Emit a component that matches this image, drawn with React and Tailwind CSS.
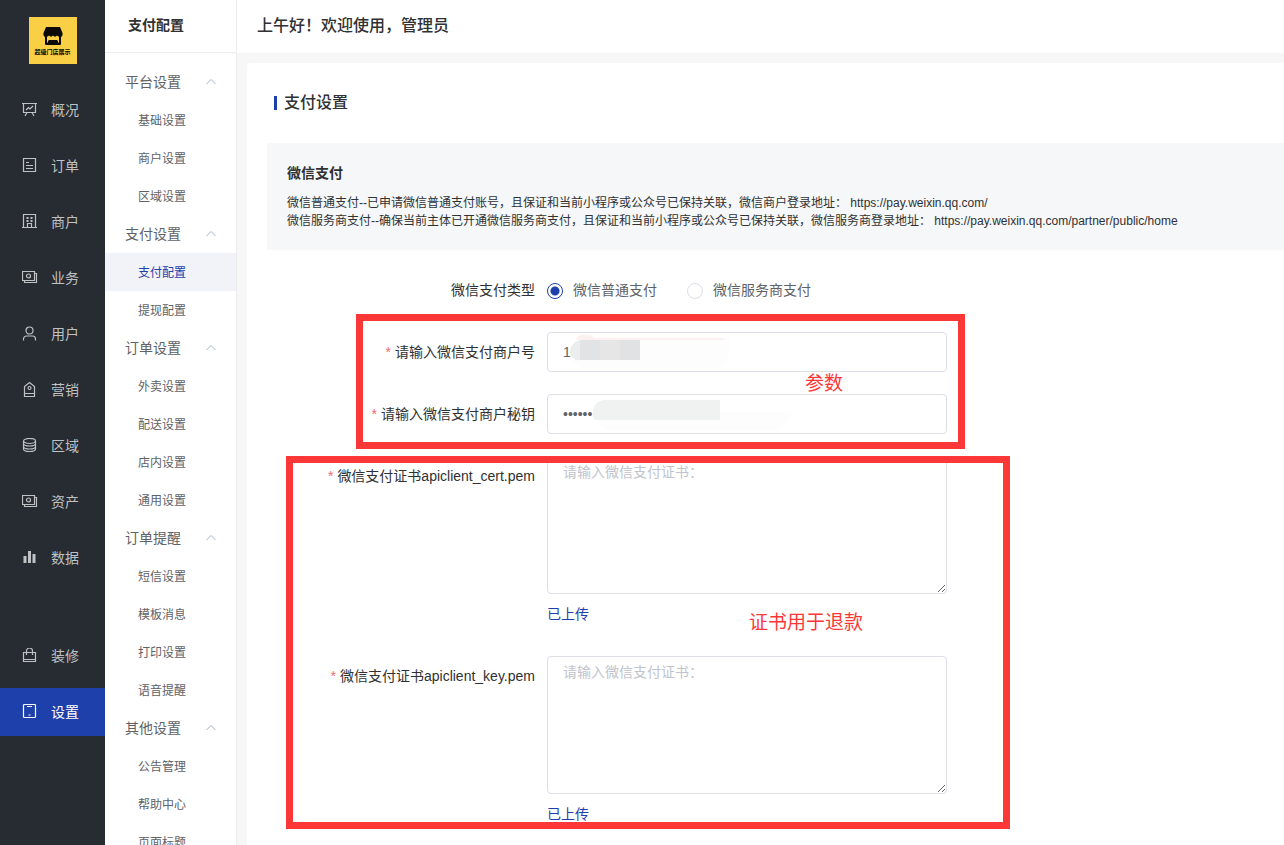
import React, { useState } from "react";

const mainMenu = [
  { name: "概况", icon: "board" },
  { name: "订单", icon: "order" },
  { name: "商户", icon: "building" },
  { name: "业务", icon: "money" },
  { name: "用户", icon: "user" },
  { name: "营销", icon: "tag" },
  { name: "区域", icon: "coins" },
  { name: "资产", icon: "money" },
  { name: "数据", icon: "chart" },
];

const bottomMenu = [
  { name: "装修", icon: "bag" },
  { name: "设置", icon: "tablet" },
];

const subMenu = [
  { name: "平台设置", children: ["基础设置", "商户设置", "区域设置"] },
  { name: "支付设置", children: ["支付配置", "提现配置"] },
  { name: "订单设置", children: ["外卖设置", "配送设置", "店内设置", "通用设置"] },
  { name: "订单提醒", children: ["短信设置", "模板消息", "打印设置", "语音提醒"] },
  { name: "其他设置", children: ["公告管理", "帮助中心", "页面标题"] },
];

const icons = {
  board: (
    <>
      <path d="M0 1.5h15M1.5 1.5v9h12v-9M5 10.5L3 14M10 10.5l2 3.5" />
      <path d="M4 8l2.5-2.500 1.500 1.500L11 4" />
    </>
  ),
  order: (
    <>
      <path d="M1.5 .5h12v13h-12z" />
      <path d="M4 4.5h3M4 7.5h7M4 10.5h7" />
    </>
  ),
  building: (
    <>
      <path d="M1.5 13V.5h12V13M0 13.500h15M5.500 13v-3.500h4V13" />
      <path d="M4.500 4h2M8.500 4h2M4.500 7h2M8.500 7h2" strokeWidth="2" />
    </>
  ),
  money: (
    <>
      <path d="M.5 1.5h12v9H.5zM2.5 10.5v2h12v-9h-2" />
      <circle cx="6.5" cy="6" r="2" />
    </>
  ),
  user: (
    <>
      <circle cx="7.5" cy="4.500" r="3.5" />
      <path d="M1.5 14.500V13a3 3 0 0 1 3-3h6a3 3 0 0 1 3 3v1.500" />
    </>
  ),
  tag: (
    <>
      <path d="M2.5 14.500V4.500L7.500 .5l5 4v10zM2.5 11.500h10" />
      <circle cx="7.5" cy="6" r="1.5" />
    </>
  ),
  coins: (
    <>
      <ellipse cx="7.5" cy="3" rx="6" ry="2.5" />
      <path d="M1.5 3v2.500C1.5 7 4 8 7.500 8s6-1 6-2.500V3" />
      <path d="M1.5 6v2.500C1.5 10 4 11 7.500 11s6-1 6-2.500V6" />
      <path d="M1.5 9v2C1.5 12.500 4 13.500 7.500 13.500s6-1 6-2.500V9" />
    </>
  ),
  chart: <path d="M3 13V6M7.5 13V1M12 13V4" strokeWidth="3" />,
  bag: (
    <>
      <path d="M1.5 4.500h12v9h-12zM1.5 11.500h12" />
      <path d="M4.500 7V3a3 3 0 0 1 6 0v4" />
    </>
  ),
  tablet: (
    <>
      <rect x="1.5" y=".5" width="12" height="13" rx="1" />
      <path d="M5 2.500h5M6.500 11h2" />
    </>
  ),
};

const MenuIcon = ({ name }) => (
  <svg
    className="h-4 w-4 shrink-0"
    viewBox="0 0 16 16"
    fill="none"
    stroke="currentColor"
    strokeWidth="1.2"
  >
    {icons[name]}
  </svg>
);

const MenuItem = ({ item, active, onClick }) => (
  <button
    onClick={onClick}
    className={`flex h-12 w-full items-center gap-[13px] pl-[22px] text-sm ${
      active ? "bg-[#1d40ab] text-white" : "text-[#bfc1c3]"
    }`}
  >
    <MenuIcon name={item.icon} />
    {item.name}
  </button>
);

const Logo = () => (
  <div className="flex h-[47px] w-12 flex-col items-center bg-[#f9d045] pt-[10px]">
    <svg className="h-[19px] w-5" viewBox="0 0 20 19">
      <path
        d="M3 0h14l2.500 6c.5 2-.5 3.500-1.500 4v6.500c0 1-.5 1.500-1.500 1.500h-13C2.500 18 2 17.500 2 16.500V10C1 9.500 0 8 .5 6z"
        fill="#0b0905"
      />
      <path
        d="M4 9.500c1 0 1.500-.5 2-1 1 1.500 3 1.500 4 0 1 1.500 3 1.500 4 0 .5.5 1 1 2 1v6h-1V14l-1-1H6l-1 1v1.500H4z"
        fill="#f9d045"
      />
    </svg>
    <span className="mt-[2px] whitespace-nowrap text-[6px] leading-[8px] font-bold text-black">
      超级门店展示
    </span>
  </div>
);

const FormItem = ({ label, id, required, children }) => (
  <div className="mb-[22px] flex">
    <label
      htmlFor={id}
      className="w-[280px] shrink-0 pr-3 text-right text-sm leading-10 text-[#303133]"
    >
      {required && <span className="mr-1 text-[#f56c6c]">*</span>}
      {label}
    </label>
    <div className="min-w-0 flex-1">{children}</div>
  </div>
);

const RadioItem = ({ label, value, checked, onChange }) => (
  <label className="flex h-10 items-center gap-[10px] text-sm text-[#606266]">
    <input
      type="radio"
      name="payType"
      value={value}
      checked={checked}
      onChange={onChange}
      className="mt-px h-4 w-4 appearance-none rounded-full border border-[#dcdfe6] bg-white checked:border-[#1d40ab] checked:bg-[radial-gradient(circle,#1d40ab_4px,#fff_5px)]"
    />
    {label}
  </label>
);

const inputClass =
  "block h-10 w-full max-w-[400px] rounded border border-[#dcdfe6] bg-white px-[15px] text-sm text-[#606266] outline-none";

const textareaClass =
  "block h-[138px] w-full max-w-[400px] resize rounded border border-[#dcdfe6] bg-white px-[15px] py-[5px] text-sm leading-[21px] text-[#606266] placeholder-[#c0c4cc] outline-none";

const App = () => {
  const [activeMain, setActiveMain] = useState("设置");
  const [activeSub, setActiveSub] = useState("支付配置");
  const [closed, setClosed] = useState([]);
  const [payType, setPayType] = useState("normal");
  const [mchId, setMchId] = useState("1");
  const [mchKey, setMchKey] = useState("secret");

  const toggleGroup = (name) => {
    setClosed((prev) =>
      prev.includes(name) ? prev.filter((n) => n !== name) : [...prev, name]
    );
  };

  return (
    <div className="flex h-screen overflow-hidden bg-[#f7f7f7] font-['Liberation_Sans','Noto_Sans_CJK_SC',sans-serif] text-[#303133]">
      {/* Main Menu */}
      <nav className="w-[105px] shrink-0 overflow-hidden bg-[#272b32]">
        <div className="flex justify-center pt-[17px] pb-[22px]">
          <Logo />
        </div>
        <div className="flex flex-col gap-2">
          {mainMenu.map((item) => (
            <MenuItem
              key={item.name}
              item={item}
              active={activeMain === item.name}
              onClick={() => setActiveMain(item.name)}
            />
          ))}
        </div>
        <div className="mt-[50px] flex flex-col gap-2">
          {bottomMenu.map((item) => (
            <MenuItem
              key={item.name}
              item={item}
              active={activeMain === item.name}
              onClick={() => setActiveMain(item.name)}
            />
          ))}
        </div>
      </nav>

      {/* Sub Menu */}
      <aside className="w-[132px] shrink-0 overflow-hidden border-r border-[#ececec] bg-white">
        <h2 className="h-[53px] border-b border-[#ececec] pl-[23px] text-sm leading-[50px] font-bold">
          {activeSub}
        </h2>
        <div className="pt-[10px]">
          {subMenu.map((group) => (
            <div key={group.name}>
              <button
                onClick={() => toggleGroup(group.name)}
                className="flex h-[38px] w-full items-center justify-between px-5 text-sm text-[#606266]"
              >
                {group.name}
                <svg
                  className={`h-[6px] w-[10px] ${
                    closed.includes(group.name) ? "rotate-180" : ""
                  }`}
                  viewBox="0 0 10 6"
                  fill="none"
                  stroke="#a3b1c2"
                >
                  <path d="M.5 5L5 .5 9.500 5" />
                </svg>
              </button>
              {!closed.includes(group.name) &&
                group.children.map((child) => (
                  <button
                    key={child}
                    onClick={() => setActiveSub(child)}
                    className={`block h-[38px] w-full pt-[2px] pl-[33px] text-left text-xs ${
                      activeSub === child
                        ? "bg-[#f2f3f8] text-[#1d40ab]"
                        : "text-[#606266]"
                    }`}
                  >
                    {child}
                  </button>
                ))}
            </div>
          ))}
        </div>
      </aside>

      {/* Content */}
      <div className="flex min-w-0 flex-1 flex-col">
        <header className="h-[53px] shrink-0 bg-white pl-5 text-base leading-[52px] font-medium">
          上午好！欢迎使用，管理员
        </header>
        <main className="mt-[10px] ml-[10px] min-h-0 flex-1 overflow-hidden rounded-tl bg-white pl-5">
          <div className="flex h-20 items-center gap-[7px] pl-[7px]">
            <span className="h-[14px] w-[3px] bg-[#1d40ab]"></span>
            <h1 className="text-base font-medium">支付设置</h1>
          </div>

          <section className="h-[107px] bg-[#f5f7f9] px-5 pt-5">
            <h3 className="mb-[11px] text-sm leading-5 font-bold">微信支付</h3>
            <p className="text-xs leading-[18px]">
              微信普通支付--已申请微信普通支付账号，且保证和当前小程序或公众号已保持关联，微信商户登录地址：
              https://pay.weixin.qq.com/
            </p>
            <p className="text-xs leading-[18px]">
              微信服务商支付--确保当前主体已开通微信服务商支付，且保证和当前小程序或公众号已保持关联，微信服务商登录地址：
              https://pay.weixin.qq.com/partner/public/home
            </p>
          </section>

          <form className="relative mt-5">
            <FormItem label="微信支付类型">
              <div className="flex gap-[30px]">
                <RadioItem
                  label="微信普通支付"
                  value="normal"
                  checked={payType === "normal"}
                  onChange={() => setPayType("normal")}
                />
                <RadioItem
                  label="微信服务商支付"
                  value="service"
                  checked={payType === "service"}
                  onChange={() => setPayType("service")}
                />
              </div>
            </FormItem>
            <FormItem label="请输入微信支付商户号" id="mchId" required>
              <div className="relative">
                <input
                  id="mchId"
                  type="text"
                  value={mchId}
                  onChange={(e) => setMchId(e.target.value)}
                  className={inputClass}
                />
                <span className="absolute top-[5px] left-6 h-[31px] w-[158px] rounded-l-full rounded-br-full bg-[#fdfdfd]"></span>
                <span className="absolute top-[6px] left-[34px] h-[2px] w-[143px] bg-[#fdf0f0]"></span>
                <span className="absolute top-[3px] left-[29px] h-[5px] w-[18px] rounded-t-full bg-[#fdf0f0]"></span>
                <span className="absolute top-2 left-[23px] flex h-5 overflow-hidden rounded-tl-xl rounded-bl-lg">
                  <span className="w-[10px] bg-[#ededee]"></span>
                  <span className="w-5 bg-[#e2e3e5]"></span>
                  <span className="w-5 bg-[#e6e6e6]"></span>
                  <span className="w-5 bg-[#e1e2e4]"></span>
                </span>
              </div>
            </FormItem>
            <FormItem label="请输入微信支付商户秘钥" id="mchKey" required>
              <div className="relative">
                <input
                  id="mchKey"
                  type="password"
                  value={mchKey}
                  onChange={(e) => setMchKey(e.target.value)}
                  className={inputClass}
                />
                <span className="absolute top-[18px] left-12 h-[19px] w-[196px] rounded-b-full bg-[#fdfdfd]"></span>
                <span className="absolute top-[6px] left-[46px] h-5 w-[127px] rounded-tl-xl rounded-bl bg-[#f0f1f1]"></span>
              </div>
            </FormItem>
            <FormItem label="微信支付证书apiclient_cert.pem" id="cert" required>
              <textarea
                id="cert"
                placeholder="请输入微信支付证书："
                className={textareaClass}
              />
              <p className="text-sm leading-10 text-[#1d40ab]">已上传</p>
            </FormItem>
            <FormItem label="微信支付证书apiclient_key.pem" id="key" required>
              <textarea
                id="key"
                placeholder="请输入微信支付证书："
                className={textareaClass}
              />
              <p className="text-sm leading-10 text-[#1d40ab]">已上传</p>
            </FormItem>

            {/* Notes drawn over the form */}
            <div className="pointer-events-none absolute top-[44px] left-[89px] h-[135px] w-[609px] border-7 border-[#fc3737]"></div>
            <div className="pointer-events-none absolute top-[186px] left-[19px] h-[373px] w-[724px] border-7 border-[#fc3737]"></div>
            <span className="absolute top-[100px] left-[538px] text-[19px] leading-7 text-[#fc3737]">
              参数
            </span>
            <span className="absolute top-[339px] left-[482px] text-[19px] leading-7 text-[#fc3737]">
              证书用于退款
            </span>
          </form>
        </main>
      </div>
    </div>
  );
};

export default App;
